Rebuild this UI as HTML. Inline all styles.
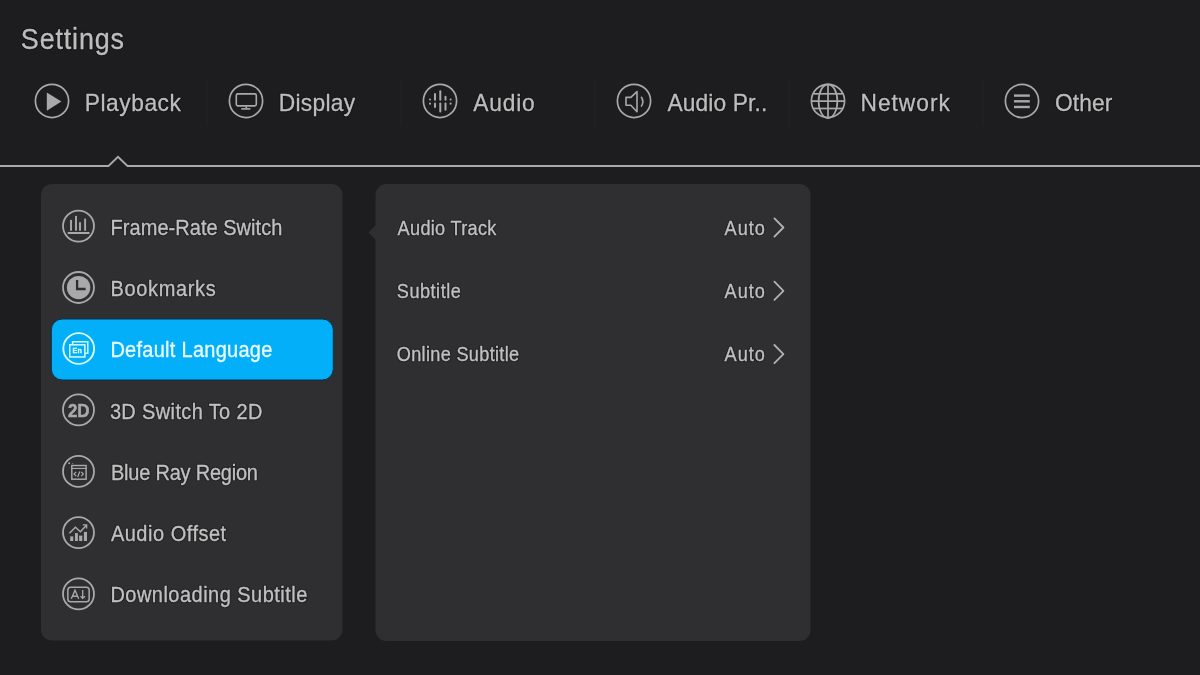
<!DOCTYPE html>
<html><head><meta charset="utf-8"><style>
html,body{margin:0;padding:0;background:#1d1d1f;}
body{width:1200px;height:675px;overflow:hidden;}
svg{display:block;font-family:"Liberation Sans",sans-serif;will-change:transform;}
</style></head><body>
<svg width="1200" height="675" viewBox="0 0 1200 675">
<rect width="1200" height="675" fill="#1d1d1f"/>
<rect x="206.5" y="80" width="1" height="46" fill="#242426"/>
<rect x="400.5" y="80" width="1" height="46" fill="#242426"/>
<rect x="594.5" y="80" width="1" height="46" fill="#242426"/>
<rect x="788.5" y="80" width="1" height="46" fill="#242426"/>
<rect x="982.5" y="80" width="1" height="46" fill="#242426"/>
<circle cx="52" cy="100.95" r="16.6" fill="none" stroke="#a9a9a9" stroke-width="1.7"/>
<circle cx="246" cy="100.95" r="16.6" fill="none" stroke="#a9a9a9" stroke-width="1.7"/>
<circle cx="440" cy="100.95" r="16.6" fill="none" stroke="#a9a9a9" stroke-width="1.7"/>
<circle cx="634" cy="100.95" r="16.6" fill="none" stroke="#a9a9a9" stroke-width="1.7"/>
<circle cx="828" cy="100.95" r="16.6" fill="none" stroke="#a9a9a9" stroke-width="1.7"/>
<circle cx="1022" cy="100.95" r="16.6" fill="none" stroke="#a9a9a9" stroke-width="1.7"/>
<path d="M46.8 92.4 L61.4 101.6 L46.8 110.8 Z" fill="#a9a9a9"/>
<rect x="236.3" y="93.9" width="20" height="12" rx="1.6" fill="none" stroke="#a9a9a9" stroke-width="1.6"/>
<rect x="245.5" y="106.5" width="1.6" height="1.8" fill="#a9a9a9"/>
<rect x="241.3" y="108.1" width="9.1" height="1.6" fill="#a9a9a9"/>
<line x1="430" y1="99.4" x2="430" y2="99.6" stroke="#a9a9a9" stroke-width="2" stroke-linecap="round"/>
<line x1="430" y1="103.6" x2="430" y2="103.8" stroke="#a9a9a9" stroke-width="2" stroke-linecap="round"/>
<line x1="435" y1="94" x2="435" y2="99.8" stroke="#a9a9a9" stroke-width="2" stroke-linecap="round"/>
<line x1="435" y1="103.4" x2="435" y2="107" stroke="#a9a9a9" stroke-width="2" stroke-linecap="round"/>
<line x1="440.3" y1="91.2" x2="440.3" y2="99.8" stroke="#a9a9a9" stroke-width="2" stroke-linecap="round"/>
<line x1="440.3" y1="103.4" x2="440.3" y2="111.4" stroke="#a9a9a9" stroke-width="2" stroke-linecap="round"/>
<line x1="445.5" y1="96.8" x2="445.5" y2="99.8" stroke="#a9a9a9" stroke-width="2" stroke-linecap="round"/>
<line x1="445.5" y1="103.4" x2="445.5" y2="109.8" stroke="#a9a9a9" stroke-width="2" stroke-linecap="round"/>
<line x1="450.6" y1="99.4" x2="450.6" y2="99.6" stroke="#a9a9a9" stroke-width="2" stroke-linecap="round"/>
<line x1="450.6" y1="103.6" x2="450.6" y2="103.8" stroke="#a9a9a9" stroke-width="2" stroke-linecap="round"/>
<path d="M626 97.4 H630.8 L637 91.6 V111.8 L630.8 105.2 H626 Z" fill="none" stroke="#a9a9a9" stroke-width="1.6" stroke-linejoin="round"/>
<path d="M641.2 96.8 Q644.5 101.6 641.2 106.6" fill="none" stroke="#a9a9a9" stroke-width="1.6"/>
<g fill="none" stroke="#a9a9a9" stroke-width="1.7"><ellipse cx="828" cy="101.2" rx="9.4" ry="16.9"/><line x1="828" y1="84.3" x2="828" y2="118.1"/><line x1="811.1" y1="101.2" x2="844.9" y2="101.2"/><line x1="813.6" y1="93.8" x2="842.4" y2="93.8"/><line x1="813.6" y1="108.5" x2="842.4" y2="108.5"/></g>
<line x1="1014" y1="95.6" x2="1029.8" y2="95.6" stroke="#a9a9a9" stroke-width="2.4"/>
<line x1="1014" y1="101.3" x2="1029.8" y2="101.3" stroke="#a9a9a9" stroke-width="2.4"/>
<line x1="1014" y1="107" x2="1029.8" y2="107" stroke="#a9a9a9" stroke-width="2.4"/>
<path d="M0 166 H108.5 L118 156.8 L127.5 166 H1200" fill="none" stroke="#aaaaaa" stroke-width="1.8"/>
<g transform="translate(84.7 110.8) scale(0.93 1)"><text x="0" y="0" font-size="24.5" textLength="103.46" lengthAdjust="spacing" fill="none" stroke="#000" stroke-opacity="0.28" stroke-width="2.6" stroke-linejoin="round">Playback</text><text x="0" y="0" font-size="24.5" textLength="103.46" lengthAdjust="spacing" fill="#bdbdbd" stroke="#bdbdbd" stroke-width="0.32">Playback</text></g>

<g transform="translate(278.8 110.8) scale(0.93 1)"><text x="0" y="0" font-size="24.5" textLength="82.09" lengthAdjust="spacing" fill="none" stroke="#000" stroke-opacity="0.28" stroke-width="2.6" stroke-linejoin="round">Display</text><text x="0" y="0" font-size="24.5" textLength="82.09" lengthAdjust="spacing" fill="#bdbdbd" stroke="#bdbdbd" stroke-width="0.32">Display</text></g>

<g transform="translate(473.3 110.8) scale(0.93 1)"><text x="0" y="0" font-size="24.5" textLength="65.99" lengthAdjust="spacing" fill="none" stroke="#000" stroke-opacity="0.28" stroke-width="2.6" stroke-linejoin="round">Audio</text><text x="0" y="0" font-size="24.5" textLength="65.99" lengthAdjust="spacing" fill="#bdbdbd" stroke="#bdbdbd" stroke-width="0.32">Audio</text></g>

<g transform="translate(667.5 110.6) scale(0.93 1)"><text x="0" y="0" font-size="24.5" textLength="107.24" lengthAdjust="spacing" fill="none" stroke="#000" stroke-opacity="0.28" stroke-width="2.6" stroke-linejoin="round">Audio Pr..</text><text x="0" y="0" font-size="24.5" textLength="107.24" lengthAdjust="spacing" fill="#bdbdbd" stroke="#bdbdbd" stroke-width="0.32">Audio Pr..</text></g>

<g transform="translate(860.5 110.6) scale(0.93 1)"><text x="0" y="0" font-size="24.5" textLength="96.09" lengthAdjust="spacing" fill="none" stroke="#000" stroke-opacity="0.28" stroke-width="2.6" stroke-linejoin="round">Network</text><text x="0" y="0" font-size="24.5" textLength="96.09" lengthAdjust="spacing" fill="#bdbdbd" stroke="#bdbdbd" stroke-width="0.32">Network</text></g>

<g transform="translate(1055.0 110.7) scale(0.93 1)"><text x="0" y="0" font-size="24.5" textLength="61.59" lengthAdjust="spacing" fill="none" stroke="#000" stroke-opacity="0.28" stroke-width="2.6" stroke-linejoin="round">Other</text><text x="0" y="0" font-size="24.5" textLength="61.59" lengthAdjust="spacing" fill="#bdbdbd" stroke="#bdbdbd" stroke-width="0.32">Other</text></g>

<g transform="translate(20.8 49.4) scale(0.93 1)"><text x="0" y="0" font-size="29" textLength="111.08" lengthAdjust="spacing" fill="none" stroke="#000" stroke-opacity="0.28" stroke-width="2.6" stroke-linejoin="round">Settings</text><text x="0" y="0" font-size="29" textLength="111.08" lengthAdjust="spacing" fill="#bdbdbd" stroke="#bdbdbd" stroke-width="0.32">Settings</text></g>

<rect x="41" y="184" width="301.5" height="456.5" rx="11" fill="#2f2f31"/>
<rect x="375.5" y="184" width="435" height="457" rx="11" fill="#2f2f31"/>
<path d="M376 224.8 L368.5 232.5 L376 240.2 Z" fill="#2f2f31"/>
<rect x="51.3" y="319" width="282" height="61" rx="11" fill="#02aff8" stroke="#0b3148" stroke-width="1"/>
<circle cx="78.5" cy="226.1" r="15.5" fill="none" stroke="#a9a9a9" stroke-width="1.8"/>
<circle cx="78.5" cy="287.5" r="15.5" fill="none" stroke="#a9a9a9" stroke-width="1.8"/>
<circle cx="78.5" cy="409.9" r="15.5" fill="none" stroke="#a9a9a9" stroke-width="1.8"/>
<circle cx="78.5" cy="471.4" r="15.5" fill="none" stroke="#a9a9a9" stroke-width="1.8"/>
<circle cx="78.5" cy="532.6" r="15.5" fill="none" stroke="#a9a9a9" stroke-width="1.8"/>
<circle cx="78.5" cy="593.9" r="15.5" fill="none" stroke="#a9a9a9" stroke-width="1.8"/>
<rect x="70.05" y="219.9" width="1.9" height="10.799999999999983" fill="#a9a9a9"/>
<rect x="75.05" y="215.9" width="1.9" height="14.799999999999983" fill="#a9a9a9"/>
<rect x="79.05" y="222.2" width="1.9" height="8.5" fill="#a9a9a9"/>
<rect x="84.14999999999999" y="218.6" width="1.9" height="12.099999999999994" fill="#a9a9a9"/>
<rect x="67.7" y="232" width="21.8" height="2" fill="#a9a9a9"/>
<circle cx="78.6" cy="287.6" r="11.7" fill="#a9a9a9"/>
<path d="M77.1 280.1 V289 H85.6" fill="none" stroke="#2f2f31" stroke-width="2.3"/>
<circle cx="78.7" cy="348.5" r="15.4" fill="none" stroke="#d8fbff" stroke-width="1.9"/>
<path d="M72.6 344.3 V341.8 H87.8 V353.2 H85.2" fill="none" stroke="#d8fbff" stroke-width="1.5"/>
<rect x="69.75" y="344.85" width="15.1" height="12.1" fill="#02aff8" stroke="#d8fbff" stroke-width="1.5"/>
<text x="72.6" y="352.6" font-size="7.6" font-weight="700" fill="#d8fbff" stroke="#d8fbff" stroke-width="0.3" textLength="9.2" lengthAdjust="spacingAndGlyphs">En</text>
<text x="67.9" y="416.7" font-size="18.4" font-weight="700" fill="#a9a9a9" stroke="#a9a9a9" stroke-width="0.5" textLength="21.6" lengthAdjust="spacingAndGlyphs">2D</text>
<rect x="71.8" y="465.5" width="14.3" height="13.7" fill="none" stroke="#a9a9a9" stroke-width="1.45"/>
<rect x="71.5" y="467.9" width="15" height="1.1" fill="#a9a9a9"/>
<path d="M76.2 471.8 L74 474 L76.2 476.2 M81.2 471.8 L83.4 474 L81.2 476.2 M79.8 471.5 L77.7 477" fill="none" stroke="#a9a9a9" stroke-width="1.2"/>
<circle cx="69.2" cy="463.2" r="1" fill="#a9a9a9"/>
<circle cx="72.7" cy="463.4" r="0.6" fill="#a9a9a9" opacity="0.6"/>
<rect x="70.2" y="536.4" width="3.0999999999999943" height="4.600000000000023" fill="#a9a9a9"/>
<rect x="75" y="533.1" width="2.9000000000000057" height="7.899999999999977" fill="#a9a9a9"/>
<rect x="79.1" y="535.6" width="3.200000000000003" height="5.399999999999977" fill="#a9a9a9"/>
<rect x="83.9" y="531.9" width="3.0999999999999943" height="9.100000000000023" fill="#a9a9a9"/>
<path d="M69.4 533.3 L75.4 527.3 L80.4 531.7 L86.2 525.6" fill="none" stroke="#a9a9a9" stroke-width="1.5"/>
<path d="M82.8 524.9 H86.6 V528.6" fill="none" stroke="#a9a9a9" stroke-width="1.4"/>
<rect x="67.85" y="587.15" width="21.3" height="14.7" rx="2.8" fill="none" stroke="#a9a9a9" stroke-width="1.5"/>
<path d="M71.3 598.8 L75 590.2 L78.7 598.8 M72.5 596.3 H77.5" fill="none" stroke="#a9a9a9" stroke-width="1.4"/>
<path d="M82.7 590 V598.3 M80.6 596.2 L82.7 598.4 L84.9 596.2" fill="none" stroke="#a9a9a9" stroke-width="1.3"/>
<g transform="translate(110.6 234.9) scale(0.93 1)"><text x="0" y="0" font-size="21.5" textLength="184.62" lengthAdjust="spacing" fill="none" stroke="#000" stroke-opacity="0.28" stroke-width="2.6" stroke-linejoin="round">Frame-Rate Switch</text><text x="0" y="0" font-size="21.5" textLength="184.62" lengthAdjust="spacing" fill="#c0c0c0" stroke="#c0c0c0" stroke-width="0.32">Frame-Rate Switch</text></g>

<g transform="translate(110.4 295.7) scale(0.93 1)"><text x="0" y="0" font-size="21.5" textLength="113.28" lengthAdjust="spacing" fill="none" stroke="#000" stroke-opacity="0.28" stroke-width="2.6" stroke-linejoin="round">Bookmarks</text><text x="0" y="0" font-size="21.5" textLength="113.28" lengthAdjust="spacing" fill="#c0c0c0" stroke="#c0c0c0" stroke-width="0.32">Bookmarks</text></g>

<g transform="translate(109.9 418.6) scale(0.93 1)"><text x="0" y="0" font-size="21.5" textLength="163.90" lengthAdjust="spacing" fill="none" stroke="#000" stroke-opacity="0.28" stroke-width="2.6" stroke-linejoin="round">3D Switch To 2D</text><text x="0" y="0" font-size="21.5" textLength="163.90" lengthAdjust="spacing" fill="#c0c0c0" stroke="#c0c0c0" stroke-width="0.32">3D Switch To 2D</text></g>

<g transform="translate(111.0 480.1) scale(0.93 1)"><text x="0" y="0" font-size="21.5" textLength="158.02" lengthAdjust="spacing" fill="none" stroke="#000" stroke-opacity="0.28" stroke-width="2.6" stroke-linejoin="round">Blue Ray Region</text><text x="0" y="0" font-size="21.5" textLength="158.02" lengthAdjust="spacing" fill="#c0c0c0" stroke="#c0c0c0" stroke-width="0.32">Blue Ray Region</text></g>

<g transform="translate(110.9 541.1) scale(0.93 1)"><text x="0" y="0" font-size="21.5" textLength="123.91" lengthAdjust="spacing" fill="none" stroke="#000" stroke-opacity="0.28" stroke-width="2.6" stroke-linejoin="round">Audio Offset</text><text x="0" y="0" font-size="21.5" textLength="123.91" lengthAdjust="spacing" fill="#c0c0c0" stroke="#c0c0c0" stroke-width="0.32">Audio Offset</text></g>

<g transform="translate(110.4 602.1) scale(0.93 1)"><text x="0" y="0" font-size="21.5" textLength="211.72" lengthAdjust="spacing" fill="none" stroke="#000" stroke-opacity="0.28" stroke-width="2.6" stroke-linejoin="round">Downloading Subtitle</text><text x="0" y="0" font-size="21.5" textLength="211.72" lengthAdjust="spacing" fill="#c0c0c0" stroke="#c0c0c0" stroke-width="0.32">Downloading Subtitle</text></g>

<g transform="translate(110.4 356.6) scale(0.93 1)"><text x="0" y="0" font-size="21.5" textLength="174.16" lengthAdjust="spacing" fill="#eafcff" stroke="#eafcff" stroke-width="0.32">Default Language</text></g>

<g transform="translate(397.6 234.7) scale(0.93 1)"><text x="0" y="0" font-size="19.5" textLength="106.20" lengthAdjust="spacing" fill="none" stroke="#000" stroke-opacity="0.28" stroke-width="2.6" stroke-linejoin="round">Audio Track</text><text x="0" y="0" font-size="19.5" textLength="106.20" lengthAdjust="spacing" fill="#c0c0c0" stroke="#c0c0c0" stroke-width="0.32">Audio Track</text></g>

<g transform="translate(396.8 298) scale(0.93 1)"><text x="0" y="0" font-size="19.5" textLength="68.87" lengthAdjust="spacing" fill="none" stroke="#000" stroke-opacity="0.28" stroke-width="2.6" stroke-linejoin="round">Subtitle</text><text x="0" y="0" font-size="19.5" textLength="68.87" lengthAdjust="spacing" fill="#c0c0c0" stroke="#c0c0c0" stroke-width="0.32">Subtitle</text></g>

<g transform="translate(396.8 361.2) scale(0.93 1)"><text x="0" y="0" font-size="19.5" textLength="131.54" lengthAdjust="spacing" fill="none" stroke="#000" stroke-opacity="0.28" stroke-width="2.6" stroke-linejoin="round">Online Subtitle</text><text x="0" y="0" font-size="19.5" textLength="131.54" lengthAdjust="spacing" fill="#c0c0c0" stroke="#c0c0c0" stroke-width="0.32">Online Subtitle</text></g>

<g transform="translate(724.6 234.75) scale(0.93 1)"><text x="0" y="0" font-size="19.5" textLength="43.35" lengthAdjust="spacing" fill="none" stroke="#000" stroke-opacity="0.28" stroke-width="2.6" stroke-linejoin="round">Auto</text><text x="0" y="0" font-size="19.5" textLength="43.35" lengthAdjust="spacing" fill="#c0c0c0" stroke="#c0c0c0" stroke-width="0.32">Auto</text></g>

<g transform="translate(724.6 298) scale(0.93 1)"><text x="0" y="0" font-size="19.5" textLength="43.35" lengthAdjust="spacing" fill="none" stroke="#000" stroke-opacity="0.28" stroke-width="2.6" stroke-linejoin="round">Auto</text><text x="0" y="0" font-size="19.5" textLength="43.35" lengthAdjust="spacing" fill="#c0c0c0" stroke="#c0c0c0" stroke-width="0.32">Auto</text></g>

<g transform="translate(724.6 361.25) scale(0.93 1)"><text x="0" y="0" font-size="19.5" textLength="43.35" lengthAdjust="spacing" fill="none" stroke="#000" stroke-opacity="0.28" stroke-width="2.6" stroke-linejoin="round">Auto</text><text x="0" y="0" font-size="19.5" textLength="43.35" lengthAdjust="spacing" fill="#c0c0c0" stroke="#c0c0c0" stroke-width="0.32">Auto</text></g>

<path d="M774.4 218.4 L783.4 227.5 L774.4 236.6" fill="none" stroke="#b2b2b2" stroke-width="1.8" stroke-linecap="round" stroke-linejoin="round"/>
<path d="M774.4 281.7 L783.4 290.8 L774.4 299.9" fill="none" stroke="#b2b2b2" stroke-width="1.8" stroke-linecap="round" stroke-linejoin="round"/>
<path d="M774.4 345.0 L783.4 354.1 L774.4 363.2" fill="none" stroke="#b2b2b2" stroke-width="1.8" stroke-linecap="round" stroke-linejoin="round"/>
</svg>
</body></html>
